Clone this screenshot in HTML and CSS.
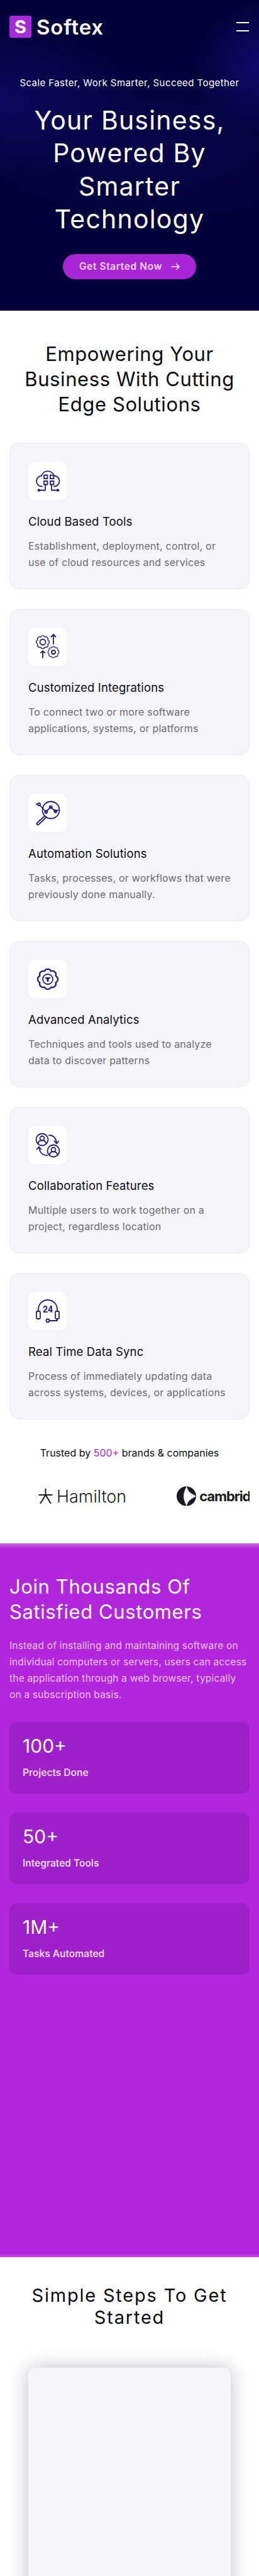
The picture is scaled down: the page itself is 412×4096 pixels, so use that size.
FILE: index.html
```html
<!DOCTYPE html>
<html lang="en">
<head>
  <meta charset="UTF-8" />
  <meta name="viewport" content="width=device-width, initial-scale=1.0" />
  <title>Softex</title>
  <link rel="stylesheet" href="styles.css">
</head>
<body>
  <svg class="defs" width="0" height="0" aria-hidden="true">
    <defs>
      <path id="gear" d="M8.87-3.67A4 4 0 0 1 8.87 3.67A4 4 0 0 1 3.67 8.87A4 4 0 0 1-3.67 8.87A4 4 0 0 1-8.87 3.67A4 4 0 0 1-8.87-3.67A4 4 0 0 1-3.67-8.87A4 4 0 0 1 3.67-8.87A4 4 0 0 1 8.87-3.67Z" />
    </defs>
  </svg>

  <section class="hero">
    <header class="topbar">
      <a class="brand" href="#"><span class="brand-mark">S</span><span class="brand-name">Softex</span></a>
      <button class="burger" aria-label="Menu"><span></span><span></span></button>
    </header>
    <p class="tagline">Scale Faster, Work Smarter, Succeed Together</p>
    <h1>Your Business, Powered By Smarter Technology</h1>
    <a class="cta" href="#">Get Started Now
      <svg width="14" height="12" viewBox="0 0 14 12" fill="none" stroke="currentColor" stroke-width="1.6"><path d="M0.5 6H13M8 1l5 5-5 5" /></svg>
    </a>
  </section>

  <section class="services">
    <h2>Empowering Your Business With Cutting Edge Solutions</h2>
    <div class="card-list">
      <article class="card">
        <div class="icon-box">
          <svg class="icon" viewBox="0 0 61 61">
            <path d="M22 39.5a8.5 8.5 0 0 1-1-17a10.5 10.5 0 0 1 20 0a8.5 8.5 0 0 1 0 17" />
            <rect x="25" y="21.5" width="5.5" height="5.5" /><rect x="35" y="21.5" width="5.5" height="5.5" />
            <rect x="25" y="31" width="5.5" height="5.5" /><rect x="35" y="31" width="5.5" height="5.5" />
            <path d="M18 45.5H27V36.5M46 45.5H37V36.5" />
            <circle class="dot" cx="17" cy="45.5" r="1.8" /><circle class="dot" cx="47" cy="45.5" r="1.8" />
          </svg>
        </div>
        <h3>Cloud Based Tools</h3>
        <p>Establishment, deployment, control, or use of cloud resources and services</p>
      </article>
      <article class="card">
        <div class="icon-box">
          <svg class="icon" viewBox="0 0 61 61">
            <use class="gear" href="#gear" transform="translate(23 23) scale(.92)" />
            <circle cx="23" cy="23" r="4.5" />
            <use class="gear" href="#gear" transform="translate(40 39) scale(.78)" />
            <circle cx="40" cy="39" r="3" />
            <path d="M40 26V11M36.5 14.5L40 11l3.5 3.5M23 48V37M20 40l3-3 3 3" />
          </svg>
        </div>
        <h3>Customized Integrations</h3>
        <p>To connect two or more software applications, systems, or platforms</p>
      </article>
      <article class="card">
        <div class="icon-box">
          <svg class="icon" viewBox="0 0 61 61">
            <circle cx="36" cy="26" r="13.5" />
            <path d="M25.5 36L14 46.5a1.6 1.6 0 0 0 2.5 2.5L28 38" />
            <path d="M12.5 16.5h2M19 19L28 28.5L35.7 21.5L43 28L48 26" />
            <circle cx="17" cy="17" r="2" /><circle cx="28.3" cy="29" r="2" /><circle cx="35.7" cy="21.3" r="2" /><circle cx="43.3" cy="28" r="2" />
          </svg>
        </div>
        <h3>Automation Solutions</h3>
        <p>Tasks, processes, or workflows that were previously done manually.</p>
      </article>
      <article class="card">
        <div class="icon-box">
          <svg class="icon" viewBox="0 0 61 61">
            <use class="gear" href="#gear" transform="translate(31 31) scale(1.42)" />
            <circle cx="31" cy="31" r="8" />
            <path class="dot" d="M27 28.5h8l-3 3v3h-2v-3z" />
          </svg>
        </div>
        <h3>Advanced Analytics</h3>
        <p>Techniques and tools used to analyze data to discover patterns</p>
      </article>
      <article class="card">
        <div class="icon-box">
          <svg class="icon" viewBox="0 0 61 61">
            <circle cx="22" cy="22" r="9.5" /><circle cx="22" cy="20" r="3.5" /><path d="M15.5 29a6.5 6 0 0 1 13 0" />
            <circle cx="40" cy="40" r="9.5" /><circle cx="40" cy="38" r="3.5" /><path d="M33.5 47a6.5 6 0 0 1 13 0" />
            <path d="M33 15c7 0 11 4 12 13M41.5 24.5L45 28.5l3-4" />
            <path d="M30 47c-7 0-12-4-13-13M13.5 37.5L17 33.5l3.5 4" />
          </svg>
        </div>
        <h3>Collaboration Features</h3>
        <p>Multiple users to work together on a project, regardless location</p>
      </article>
      <article class="card">
        <div class="icon-box">
          <svg class="icon" viewBox="0 0 61 61">
            <path d="M16 31V28a15 15 0 0 1 30 0V31" />
            <rect x="13" y="31" width="6" height="12" rx="1.5" /><rect x="43" y="31" width="6" height="12" rx="1.5" />
            <path d="M46 43V46H34" /><circle cx="31" cy="46" r="2.5" />
            <text class="icon-num" x="31" y="33" text-anchor="middle">24</text>
          </svg>
        </div>
        <h3>Real Time Data Sync</h3>
        <p>Process of immediately updating data across systems, devices, or applications</p>
      </article>
    </div>
    <p class="trusted">Trusted by <span>500+</span> brands &amp; companies</p>
    <div class="logos">
      <div class="logo logo-hamilton">
        <svg width="23" height="24" viewBox="0 0 23 24" fill="none" stroke="#1b1b22" stroke-width="2"><path d="M11.5 0v11M0.5 10h22M11.5 10L3 24M11.5 10L20 24" /></svg>
        <span>Hamilton</span>
      </div>
      <div class="logo logo-cambrid">
        <svg width="31" height="32" viewBox="0 0 31 32"><circle cx="15.5" cy="16" r="15.5" fill="#1b1b22" /><path fill="#fff" d="M16 0C13 6 11 11 11 16C11 21 13 26 16 32C17 27 19 23 24 20L31 16L24 12C19 9 17 5 16 0Z" /></svg>
        <span>cambrid</span>
      </div>
    </div>
  </section>

  <section class="join">
    <h2>Join Thousands Of Satisfied Customers</h2>
    <p class="join-text">Instead of installing and maintaining software on<br>individual computers or servers, users can access<br>the application through a web browser, typically<br>on a subscription basis.</p>
    <div class="stats">
      <div class="stat"><strong>100+</strong><span>Projects Done</span></div>
      <div class="stat"><strong>50+</strong><span>Integrated Tools</span></div>
      <div class="stat"><strong>1M+</strong><span>Tasks Automated</span></div>
    </div>
  </section>

  <section class="steps">
    <h2>Simple Steps To Get Started</h2>
    <div class="step-frame">
      <div class="step-card"></div>
    </div>
  </section>
</body>
</html>
```

FILE: styles.css
```css
* { margin: 0; padding: 0; box-sizing: border-box; }
body {
  font-family: 'Inter', 'Liberation Sans', sans-serif;
  background: #fff;
  color: #0b0b12;
  overflow-x: hidden;
}
.defs { position: absolute; }

/* hero */
.hero {
  height: 494px;
  padding: 25px 15px 0;
  text-align: center;
  color: #fff;
  background:
    radial-gradient(circle at 100% 105px, rgba(24, 16, 150, .55), transparent 100px),
    radial-gradient(ellipse 220px 120px at 0 160px, rgba(24, 16, 140, .45), transparent),
    radial-gradient(ellipse 300px 130px at 60% 230px, rgba(20, 12, 110, .3), transparent),
    #04023a;
}
.topbar {
  display: flex;
  justify-content: space-between;
  align-items: center;
  height: 35px;
}
.brand {
  display: flex;
  align-items: center;
  gap: 8px;
  color: #fff;
  text-decoration: none;
}
.brand-mark {
  width: 35px;
  height: 35px;
  border-radius: 3px;
  background: #a92ad8;
  font-size: 29px;
  font-weight: 700;
  line-height: 35px;
}
.brand-name { font-size: 33px; font-weight: 600; letter-spacing: .8px; }
.burger {
  display: flex;
  flex-direction: column;
  gap: 11px;
  width: 20px;
  margin-right: 1px;
  border: 0;
  background: none;
}
.burger span { display: block; height: 2px; background: #fff; }
.tagline {
  margin-top: 60px;
  font-size: 15px;
  line-height: 24px;
  letter-spacing: .43px;
  white-space: nowrap;
}
h1 {
  margin-top: 21px;
  padding: 0 20px;
  font-size: 41px;
  font-weight: 400;
  line-height: 52.4px;
  letter-spacing: 1.2px;
}
.cta {
  display: inline-flex;
  align-items: center;
  justify-content: center;
  gap: 14px;
  width: 212px;
  height: 40px;
  margin-top: 29px;
  border-radius: 20px;
  background: #a926d6;
  color: #f4d8fb;
  font-size: 15.5px;
  font-weight: 600;
  letter-spacing: .6px;
  text-decoration: none;
}

/* services */
.services { padding: 49px 15px 59px; }
.services h2, .join h2 {
  font-size: 31px;
  font-weight: 400;
  line-height: 40px;
  letter-spacing: .6px;
}
.services h2 { text-align: center; }
.card-list {
  display: flex;
  flex-direction: column;
  gap: 31px;
  margin-top: 41px;
}
.card {
  padding: 29px;
  border: 1px solid #e9e9ee;
  border-radius: 16px;
  background: #f5f5f9;
}
.icon-box {
  width: 61px;
  height: 61px;
  border-radius: 12px;
  background: #fff;
}
.icon {
  display: block;
  width: 61px;
  height: 61px;
  fill: none;
  stroke: #2a1a7e;
  stroke-width: 1.8;
  stroke-linejoin: round;
  stroke-linecap: round;
}
.icon .gear { vector-effect: non-scaling-stroke; stroke-width: 1.6; }
.icon .dot { fill: #2a1a7e; stroke-width: 1; }
.icon-num {
  fill: #2a1a7e;
  stroke: none;
  font-family: 'Roboto', sans-serif;
  font-size: 14px;
  font-weight: 700;
}
.card h3 {
  margin-top: 21px;
  font-size: 18.5px;
  font-weight: 400;
  line-height: 26px;
  letter-spacing: .15px;
}
.card p {
  margin-top: 13px;
  color: #6b6b74;
  font-size: 16px;
  line-height: 26px;
  letter-spacing: .2px;
}
.trusted {
  margin-top: 41px;
  font-size: 16px;
  line-height: 24px;
  text-align: center;
}
.trusted span { color: #a92ad8; }
.logos {
  display: flex;
  align-items: center;
  gap: 80px;
  height: 32px;
  margin-top: 41px;
  padding-left: 46px;
  overflow: hidden;
}
.logo {
  display: flex;
  align-items: center;
  flex: none;
  gap: 6px;
  color: #1b1b22;
}
.logo-hamilton span { font-size: 27px; font-weight: 300; }
.logo-cambrid { gap: 5px; }
.logo-cambrid span { font-size: 22px; font-weight: 700; letter-spacing: -1.1px; }

/* join */
.join {
  padding: 49px 15px 449px;
  color: #fff;
  background: linear-gradient(#cd6ae9, #b226dd 8px, #b226dd calc(100% - 6px), #c548e6);
}
.join-text {
  margin-top: 21px;
  color: #f0c4fa;
  font-size: 15.5px;
  line-height: 26px;
  letter-spacing: .2px;
  white-space: nowrap;
}
.stats {
  display: flex;
  flex-direction: column;
  gap: 30px;
  margin-top: 30px;
}
.stat {
  display: flex;
  flex-direction: column;
  height: 114px;
  padding: 18px 21px;
  border-radius: 12px;
  background: #9e20ca;
}
.stat strong { font-size: 30px; font-weight: 400; line-height: 40px; }
.stat span { margin-top: 11px; color: #f3d4fb; font-size: 15.5px; font-weight: 600; line-height: 24px; }

/* steps */
.steps { height: 507px; padding-top: 43px; }
.steps h2 {
  padding: 0 40px;
  font-size: 29px;
  font-weight: 400;
  line-height: 35px;
  letter-spacing: 1.8px;
  text-align: center;
}
.step-frame {
  height: 358px;
  margin: 36px 15px 0;
  padding: 27px 30px 0;
  overflow: hidden;
}
.step-card {
  height: 420px;
  border-radius: 12px;
  background: #f6f6fa;
  box-shadow: 0 0 30px rgba(50, 50, 90, .32);
}
```
